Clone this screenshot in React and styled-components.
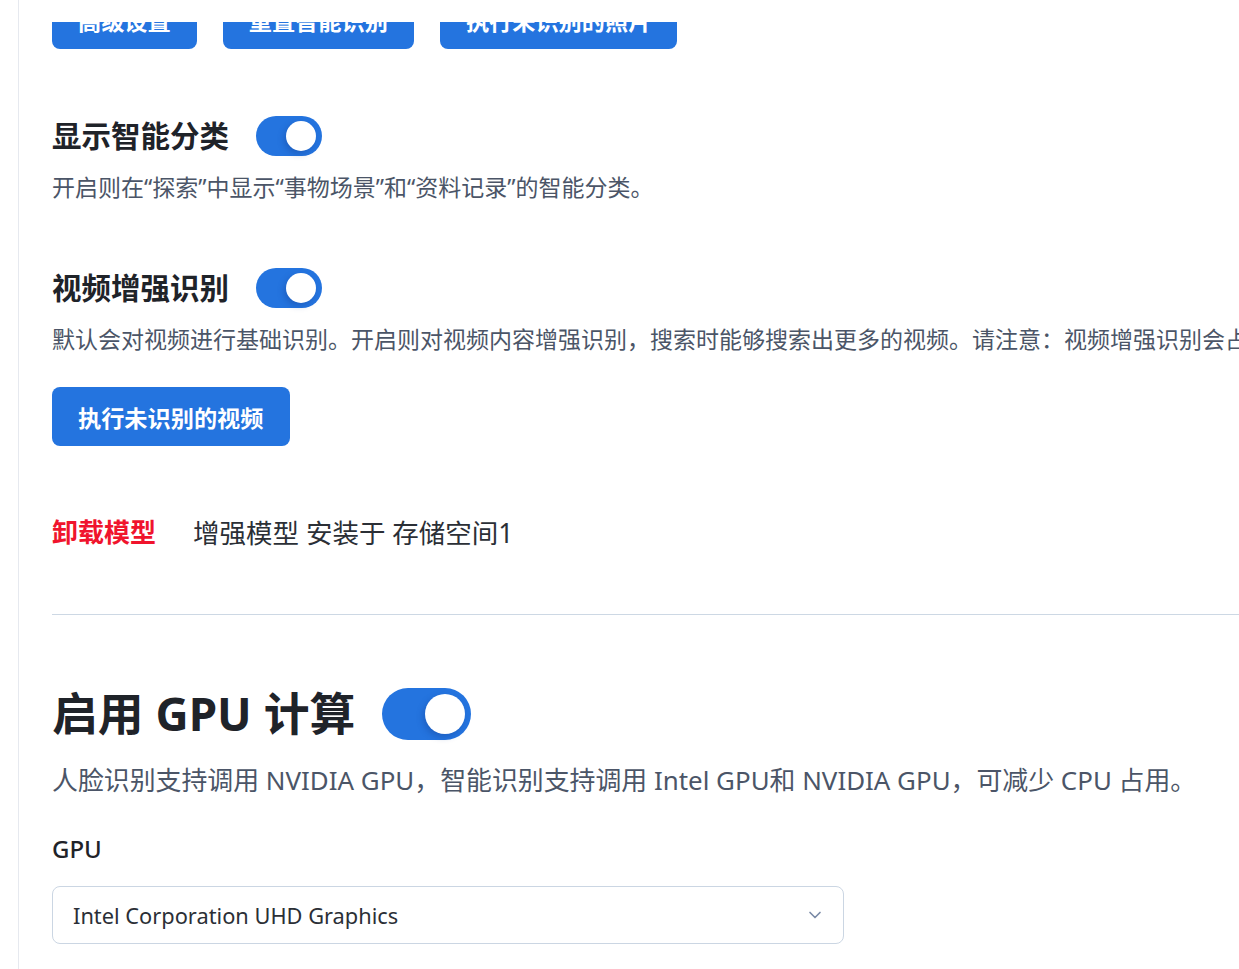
import React from "react";
import styled, { createGlobalStyle } from "styled-components";
import { ChevronDown } from "lucide-react";

const GlobalStyle = createGlobalStyle`
  html, body { margin: 0; padding: 0; background: #ffffff; overflow: hidden; }
  body { font-family: "Noto Sans", "Noto Sans CJK SC", sans-serif; color: #1f2329; }
  * { box-sizing: border-box; }
`;

const Frame = styled.div`
  display: flex;
  height: 100vh;
  width: 100vw;
`;

const Gutter = styled.div`
  width: 19px;
  flex: none;
  border-right: 1px solid #e6e9ef;
`;

const Main = styled.main`
  flex: 1;
  min-width: 0;
  overflow: hidden;
  display: flex;
  flex-direction: column;
`;

const TopBar = styled.div`
  height: 22px;
  flex: none;
  background: #ffffff;
  position: relative;
  z-index: 2;
`;

const Content = styled.div`
  margin-top: -32px;
  padding-left: 33px;
  display: flex;
  flex-direction: column;
  align-items: flex-start;
`;

const ButtonRow = styled.div`
  display: flex;
  gap: 26px;
`;

const PrimaryButton = styled.button`
  height: 59px;
  padding: 0 26px;
  border: none;
  border-radius: 8px;
  background: #2474df;
  color: #ffffff;
  font-family: inherit;
  font-size: 23.2px;
  font-weight: 700;
  white-space: nowrap;
  cursor: pointer;
  margin-top: ${(p) => p.$mt || 0}px;
`;

const SettingRow = styled.div`
  display: flex;
  align-items: center;
  gap: 27px;
  height: ${(p) => (p.$big ? 52 : 40)}px;
  margin-top: ${(p) => p.$mt}px;
`;

const Heading = styled.h2`
  margin: 0;
  font-size: ${(p) => (p.$big ? 45.8 : 29.5)}px;
  font-weight: 700;
  color: #1f2329;
  white-space: nowrap;
  line-height: 1;
`;

const Track = styled.div`
  position: relative;
  flex: none;
  width: ${(p) => (p.$big ? 89 : 66)}px;
  height: ${(p) => (p.$big ? 52 : 40)}px;
  border-radius: 999px;
  background: #2474df;
`;

const Knob = styled.span`
  position: absolute;
  top: 50%;
  right: 6px;
  width: ${(p) => (p.$big ? 40 : 30)}px;
  height: ${(p) => (p.$big ? 40 : 30)}px;
  transform: translateY(-50%);
  border-radius: 50%;
  background: #ffffff;
  box-shadow: -2px 3px 6px rgba(20, 60, 140, 0.35);
`;

const Desc = styled.p`
  margin: ${(p) => p.$mt}px 0 0;
  font-size: ${(p) => (p.$big ? 25.9 : 23)}px;
  line-height: ${(p) => (p.$big ? 36 : 32)}px;
  color: #4b5567;
  white-space: nowrap;
`;

const ModelRow = styled.div`
  display: flex;
  align-items: center;
  gap: 37px;
  margin-top: 69px;
  height: 32px;
  white-space: nowrap;
`;

const DangerLink = styled.span`
  font-size: 26px;
  font-weight: 700;
  color: #f0142d;
  cursor: pointer;
`;

const ModelInfo = styled.span`
  font-size: 26.5px;
  color: #2b2f36;
`;

const Divider = styled.hr`
  align-self: stretch;
  margin: 67px 0 0;
  border: none;
  border-top: 1px solid #cdd8e4;
  width: 100%;
`;

const FieldLabel = styled.label`
  margin-top: 35px;
  font-size: 24px;
  line-height: 32px;
  font-weight: 500;
  color: #1f2329;
`;

const Select = styled.div`
  margin-top: 21px;
  width: 792px;
  height: 58px;
  border: 1px solid #cbd6e3;
  border-radius: 8px;
  display: flex;
  align-items: center;
  justify-content: space-between;
  padding: 0 18px 0 20px;
  font-size: 21.8px;
  color: #2b2f36;
  background: #ffffff;
`;

function Toggle({ big }) {
  return (
    <Track $big={big}>
      <Knob $big={big} />
    </Track>
  );
}

export default function App() {
  return (
    <>
      <GlobalStyle />
      <Frame>
        <Gutter />
        <Main>
          <TopBar />
          <Content>
            <ButtonRow>
              <PrimaryButton>高级设置</PrimaryButton>
              <PrimaryButton>重置智能识别</PrimaryButton>
              <PrimaryButton>执行未识别的照片</PrimaryButton>
            </ButtonRow>

            <SettingRow $mt={67}>
              <Heading>显示智能分类</Heading>
              <Toggle />
            </SettingRow>
            <Desc $mt={15}>开启则在“探索”中显示“事物场景”和“资料记录”的智能分类。</Desc>

            <SettingRow $mt={65}>
              <Heading>视频增强识别</Heading>
              <Toggle />
            </SettingRow>
            <Desc $mt={15}>
              默认会对视频进行基础识别。开启则对视频内容增强识别，搜索时能够搜索出更多的视频。请注意：视频增强识别会占用较多的系统资源。
            </Desc>
            <PrimaryButton $mt={32}>执行未识别的视频</PrimaryButton>

            <ModelRow>
              <DangerLink>卸载模型</DangerLink>
              <ModelInfo>增强模型 安装于 存储空间1</ModelInfo>
            </ModelRow>

            <Divider />

            <SettingRow $big $mt={73}>
              <Heading $big>启用 GPU 计算</Heading>
              <Toggle big />
            </SettingRow>
            <Desc $big $mt={22}>
              人脸识别支持调用 NVIDIA GPU，智能识别支持调用 Intel GPU和 NVIDIA GPU，可减少 CPU 占用。
            </Desc>

            <FieldLabel>GPU</FieldLabel>
            <Select>
              <span>Intel Corporation UHD Graphics</span>
              <ChevronDown size={20} color="#7a8aa6" strokeWidth={2} />
            </Select>
          </Content>
        </Main>
      </Frame>
    </>
  );
}
